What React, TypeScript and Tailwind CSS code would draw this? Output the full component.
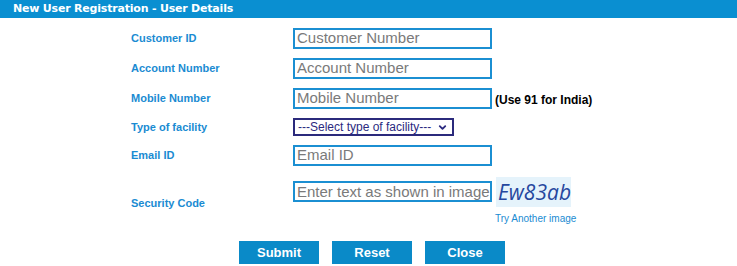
import * as React from "react";
import { ChevronDown } from "lucide-react";

const labelCls =
  "w-[162px] shrink-0 text-[11px] font-bold text-[#1a8bd2] font-['Liberation_Sans',Arial,sans-serif]";

function Field({ placeholder, className = "" }: { placeholder: string; className?: string }) {
  return (
    <div className={"w-[199px] h-[21px] border-2 border-solid border-[#1b8fd2] " + className}>
      <input
        className="block w-full h-full border-0 bg-white pl-[2px] pr-0 pb-[1px] text-[15px] text-[#333] placeholder:text-[#7a7a7a] outline-none font-['Liberation_Sans',Arial,sans-serif]"
        placeholder={placeholder}
      />
    </div>
  );
}

function Row({
  label,
  height,
  children,
}: {
  label: string;
  height: string;
  children: React.ReactNode;
}) {
  return (
    <div className={`flex items-center ${height}`}>
      <div className={labelCls}>{label}</div>
      <div className="flex items-center">{children}</div>
    </div>
  );
}

export default function App() {
  return (
    <div className="w-[737px] h-[266px] bg-white overflow-hidden font-['Liberation_Sans',Arial,sans-serif]">
      <div className="h-[18px] bg-[#0a8fd1] pl-[13px] flex items-center">
        <h1 className="text-[11px] font-bold text-white tracking-[-0.2px] font-['DejaVu_Sans',Verdana,sans-serif]">
          New User Registration - User Details
        </h1>
      </div>

      <div className="pl-[131px] pt-[5px]">
        <Row label="Customer ID" height="h-[30px]">
          <Field placeholder="Customer Number" />
        </Row>
        <Row label="Account Number" height="h-[30px]">
          <Field placeholder="Account Number" />
        </Row>
        <Row label="Mobile Number" height="h-[30px]">
          <Field placeholder="Mobile Number" />
          <span className="ml-[3px] mt-[3px] text-[12px] font-bold text-black">
            (Use 91 for India)
          </span>
        </Row>
        <Row label="Type of facility" height="h-[28px]">
          <div className="relative w-[161px] h-[18px] border-2 border-[#2b2a7c] flex items-center pl-[3px] text-[12px] text-[#2b2a80]">
            ---Select type of facility---
            <ChevronDown
              className="absolute right-[4px] top-[2px] text-[#2b2a80]"
              size={11}
              strokeWidth={4}
            />
          </div>
        </Row>
        <Row label="Email ID" height="h-[28px]">
          <Field placeholder="Email ID" />
        </Row>

        <div className="flex items-center h-[68px]">
          <div className={labelCls + " mt-[1px]"}>Security Code</div>
          <div className="flex flex-col self-start pt-[8px]">
            <div className="flex items-start">
              <Field placeholder="Enter text as shown in image" className="mt-[4px]" />
              <div className="ml-[4px] w-[75px] h-[30px] bg-[#e5f3fb] flex items-center pl-[2px]">
                <span className="text-[21px] italic text-[#26479e] font-['Open_Sans',sans-serif] leading-none">
                  Ew83ab
                </span>
              </div>
            </div>
            <a className="ml-[202px] mt-[7px] text-[10px] text-[#1a8bd2] leading-none cursor-pointer">
              Try Another image
            </a>
          </div>
        </div>
      </div>

      <div className="mt-[4px] flex justify-center gap-[13px] pl-[7px]">
        {["Submit", "Reset", "Close"].map((b) => (
          <button
            key={b}
            className="w-[80px] h-[23px] bg-[#0a8ac8] text-white text-[13px] font-bold font-['Liberation_Sans',Arial,sans-serif]"
          >
            {b}
          </button>
        ))}
      </div>
    </div>
  );
}
